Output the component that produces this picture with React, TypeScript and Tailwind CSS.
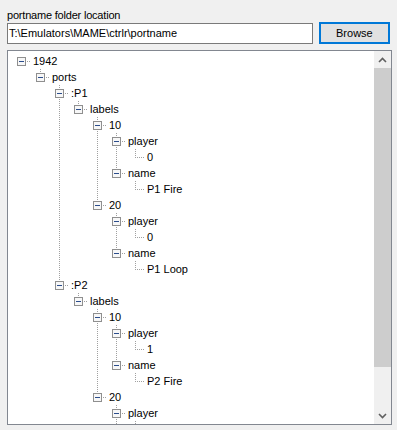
import React from 'react';

type Node = { label: string; children?: Node[] };

type Row = {
  label: string;
  level: number;
  hasChildren: boolean;
  top: boolean;
  bottom: boolean;
  guides: boolean[];
};

const leaf = (label: string): Node => ({ label });

const port = (name: string, p1: string, n1: string, p2: string, n2: string): Node => ({
  label: name,
  children: [
    {
      label: 'labels',
      children: [
        {
          label: '10',
          children: [
            { label: 'player', children: [leaf(p1)] },
            { label: 'name', children: [leaf(n1)] },
          ],
        },
        {
          label: '20',
          children: [
            { label: 'player', children: [leaf(p2)] },
            { label: 'name', children: [leaf(n2)] },
          ],
        },
      ],
    },
  ],
});

const tree: Node = {
  label: '1942',
  children: [
    {
      label: 'ports',
      children: [port(':P1', '0', 'P1 Fire', '0', 'P1 Loop'), port(':P2', '1', 'P2 Fire', '1', 'P2 Loop')],
    },
  ],
};

function flatten(node: Node, level: number, isRoot: boolean, hasNext: boolean, guides: boolean[], out: Row[]) {
  const kids = node.children ?? [];
  out.push({
    label: node.label,
    level,
    hasChildren: kids.length > 0,
    top: !isRoot,
    bottom: hasNext,
    guides,
  });
  kids.forEach((c, i) => flatten(c, level + 1, false, i < kids.length - 1, [...guides, hasNext], out));
}

const rows: Row[] = [];
flatten(tree, 0, true, false, [], rows);

// only 23 rows fit; the next one just shows the tops of its lines
const VISIBLE = 23;

const DOT = '#a0a0a0';

function TreeRow({ row, showText }: { row: Row; showText: boolean }) {
  const cx = 13 + 19 * row.level;
  const textLeft = 25 + 19 * row.level;
  return (
    <div className="relative h-4 flex items-center leading-4 whitespace-nowrap">
      <svg className="absolute left-0 top-0" width={textLeft} height={16} shapeRendering="crispEdges">
        {row.guides.map((g, i) =>
          g ? (
            <line key={i} x1={13 + 19 * i + 0.5} y1={0} x2={13 + 19 * i + 0.5} y2={16} stroke={DOT} strokeDasharray="1 1" />
          ) : null
        )}
        {row.top && <line x1={cx + 0.5} y1={0} x2={cx + 0.5} y2={8} stroke={DOT} strokeDasharray="1 1" />}
        {row.bottom && <line x1={cx + 0.5} y1={8} x2={cx + 0.5} y2={16} stroke={DOT} strokeDasharray="1 1" />}
        <line x1={cx} y1={8.5} x2={cx + 10} y2={8.5} stroke={DOT} strokeDasharray="1 1" />
        {row.hasChildren && (
          <g>
            <rect x={cx - 4 + 0.5} y={4.5} width={8} height={8} fill="#f7f7f7" stroke="#8f8f8f" />
            <line x1={cx - 2} y1={8.5} x2={cx + 3} y2={8.5} stroke="#2b4d8c" />
          </g>
        )}
      </svg>
      {showText && <span style={{ marginLeft: textLeft }}>{row.label}</span>}
    </div>
  );
}

function Chevron({ up }: { up: boolean }) {
  return (
    <svg width="9" height="6" viewBox="0 0 9 6">
      <path d={up ? 'M1 5 L4.5 1.5 L8 5' : 'M1 1 L4.5 4.5 L8 1'} fill="none" stroke="#606060" strokeWidth="1.6" />
    </svg>
  );
}

export default function App() {
  return (
    <div className="w-[397px] h-[430px] bg-[#f0f0f0] text-[11px] text-black font-['Liberation_Sans',Arial,sans-serif] px-[7px] pt-[9px] overflow-hidden">
      <div className="h-[13px] leading-[13px] tracking-[-0.2px]">portname folder location</div>

      <div className="flex items-start h-[22px]">
        <div className="mt-[1px] w-[309px] h-[21px] border border-[#7a7a7a] bg-white pl-[1px] leading-[19px]">
          T:\Emulators\MAME\ctrlr\portname
        </div>
        <button className="ml-[6px] w-[72px] h-[22px] border-2 border-[#0078d7] bg-[#e1e1e1] leading-[18px] text-[11px]">
          Browse
        </button>
      </div>

      <div className="mt-[6px] w-[385px] h-[375px] border border-[#828790] bg-white flex">
        <div className="flex-1 overflow-hidden pt-[2px]">
          {rows.slice(0, VISIBLE + 1).map((r, i) => (
            <TreeRow key={i} row={r} showText={i < VISIBLE} />
          ))}
        </div>
        <div className="w-[17px] bg-[#f0f0f0] flex flex-col">
          <div className="h-[17px] flex items-center justify-center">
            <Chevron up />
          </div>
          <div className="h-[299px] bg-[#cdcdcd]" />
          <div className="flex-1" />
          <div className="h-[17px] flex items-center justify-center">
            <Chevron up={false} />
          </div>
        </div>
      </div>
    </div>
  );
}
